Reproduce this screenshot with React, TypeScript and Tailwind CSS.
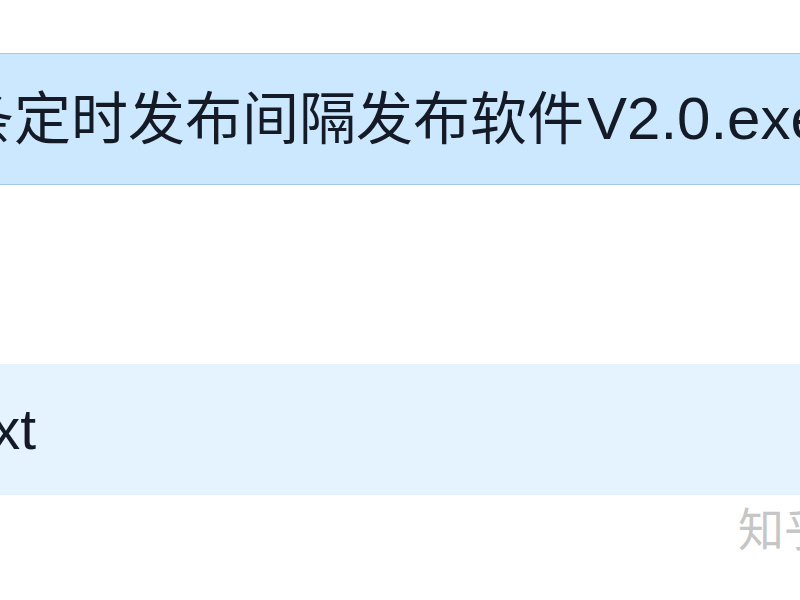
export default function App() {
  return (
    <div className="relative h-[600px] w-[800px] overflow-hidden bg-white font-['Liberation_Sans','Noto_Sans_CJK_SC',sans-serif] text-[#151b26]">
      <div className="flex flex-col pt-[53px]">
        {/* selected row */}
        <div className="flex h-[132px] items-center overflow-hidden whitespace-nowrap border-y border-[#a3c6e4] bg-[#cce8ff]">
          <span className="ml-[-100px] text-[57px] leading-none">
            头条定时发布间隔发布软件<span className="ml-[3px] text-[60px]">V2.0.exe</span>
          </span>
        </div>

        {/* hovered row */}
        <div className="mt-[179px] flex h-[131px] items-center overflow-hidden whitespace-nowrap bg-[#e5f3ff]">
          <span className="ml-[-40px] text-[57px] leading-none">.txt</span>
        </div>
      </div>

      {/* watermark */}
      <div className="absolute left-[738px] top-[503px] whitespace-nowrap font-['Noto_Sans_CJK_SC',sans-serif] text-[46px] leading-none text-[#b8b8b8] opacity-80">
        知乎
      </div>
    </div>
  );
}
